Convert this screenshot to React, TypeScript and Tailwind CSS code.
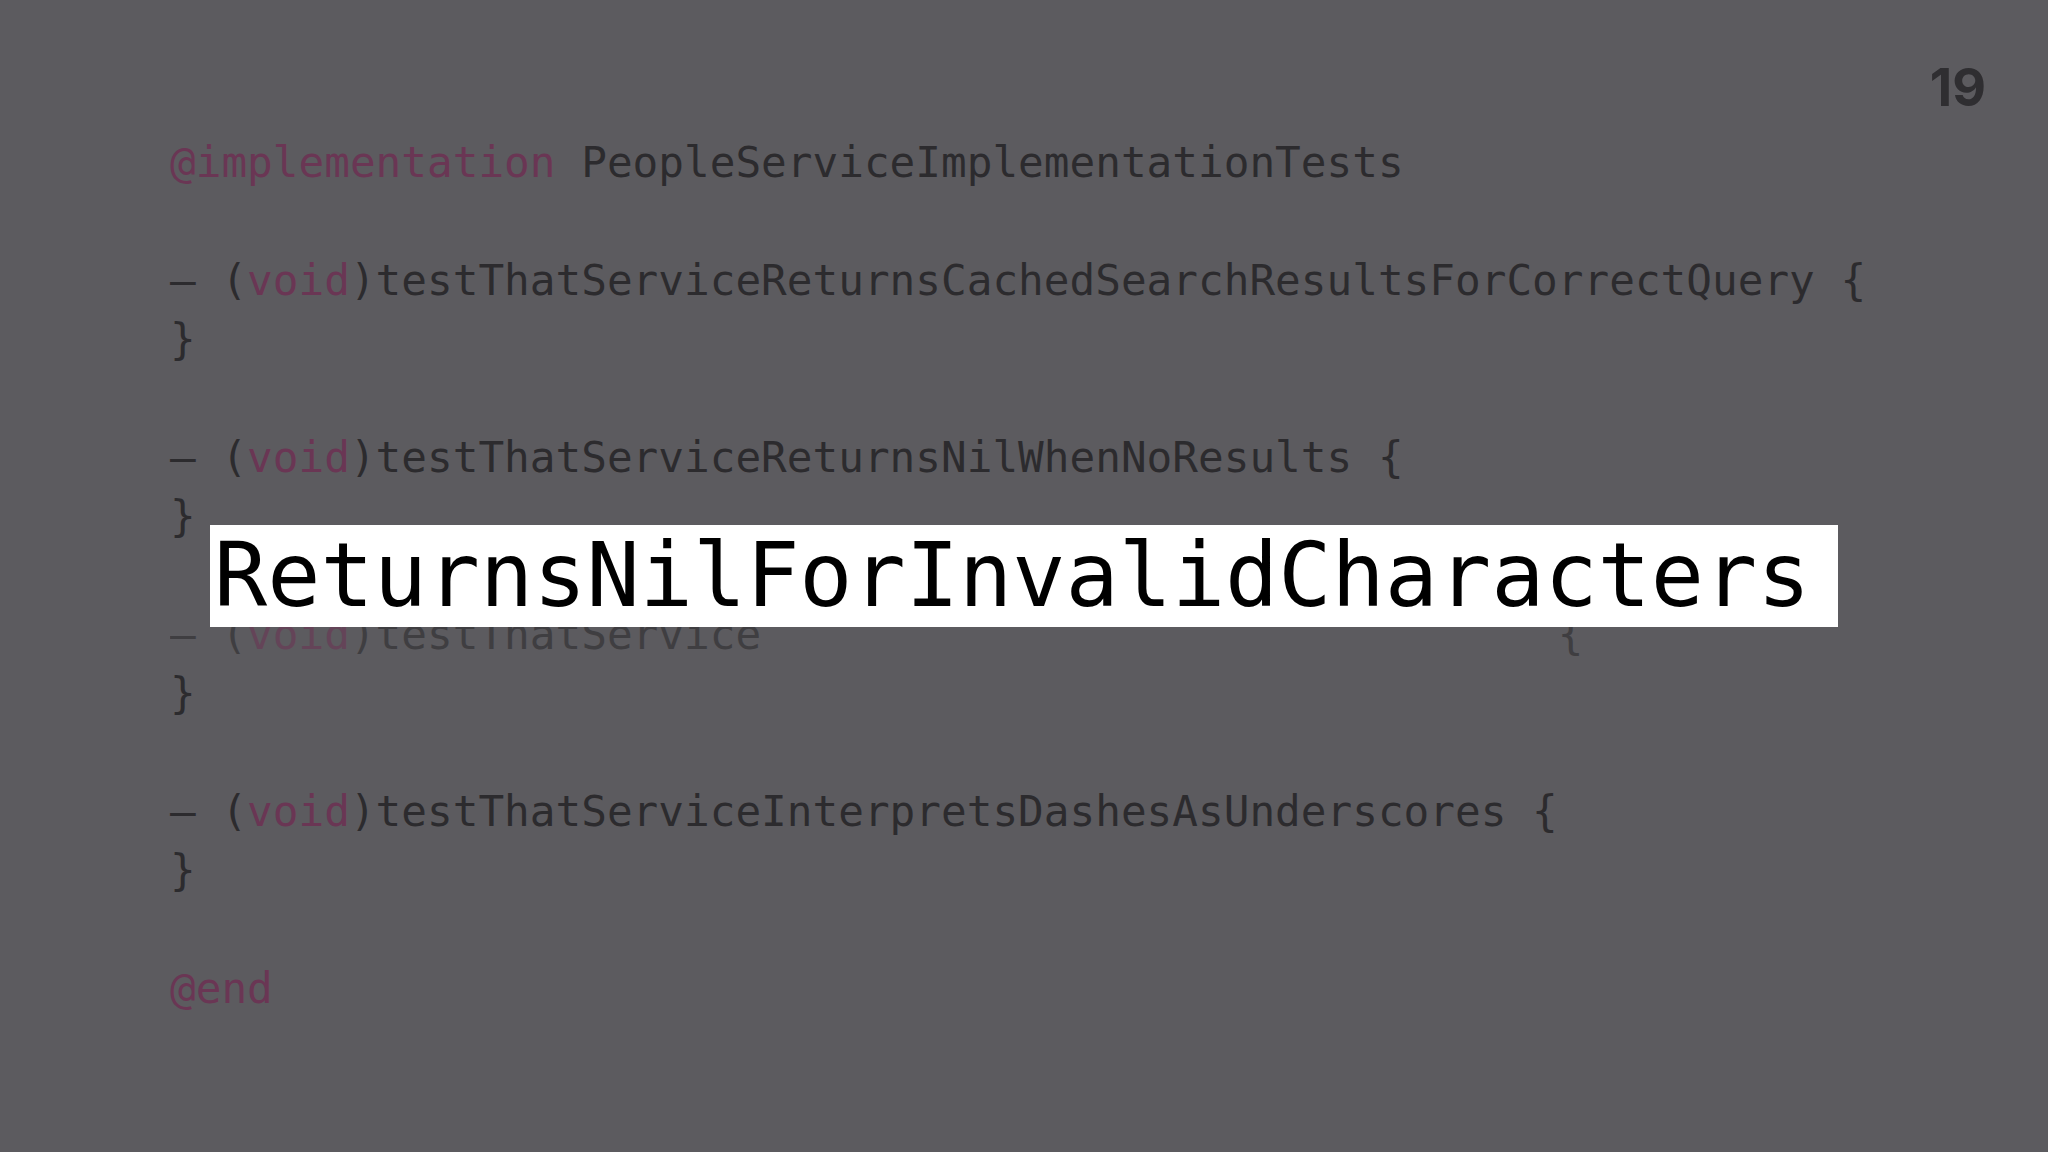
import React from "react";

const mono = { fontFamily: '"DejaVu Sans Mono", "Liberation Mono", monospace' };

type Line = { kw?: string; pre?: boolean; rest?: string; faded?: boolean };

const LINES: Line[] = [
  { kw: "@implementation", rest: " PeopleServiceImplementationTests" },
  {},
  { pre: true, kw: "void", rest: ")testThatServiceReturnsCachedSearchResultsForCorrectQuery {" },
  { rest: "}" },
  {},
  { pre: true, kw: "void", rest: ")testThatServiceReturnsNilWhenNoResults {" },
  { rest: "}" },
  {},
  { pre: true, kw: "void", rest: ")testThatService                               {", faded: true },
  { rest: "}" },
  {},
  { pre: true, kw: "void", rest: ")testThatServiceInterpretsDashesAsUnderscores {" },
  { rest: "}" },
  {},
  { kw: "@end" },
];

export default function App() {
  return (
    <div className="relative w-full h-[1152px] overflow-hidden bg-[#5c5b5f]">
      <div className="absolute right-[62px] top-[62px] text-[52px] font-bold leading-none text-[#2f2e31]" style={{ fontFamily: "Inter, sans-serif" }}>
        19
      </div>

      <div className="pl-[170px] pt-[133px]">
        <pre className="text-[42.7px] leading-[59px] text-[#2c2b2e]" style={mono}>
          {LINES.map((l, i) => (
            <div key={i} className={l.faded ? "h-[59px] opacity-60" : "h-[59px]"}>
              {l.pre ? "– (" : null}
              {l.kw ? <span className="text-[#6a3654]">{l.kw}</span> : null}
              {l.rest}
            </div>
          ))}
        </pre>
      </div>

      <div className="absolute left-[210px] top-[525px] w-[1628px] h-[102px] bg-white pl-[4px]">
        <span className="block text-[88.4px] leading-[102px] text-black" style={mono}>
          ReturnsNilForInvalidCharacters
        </span>
      </div>
    </div>
  );
}
